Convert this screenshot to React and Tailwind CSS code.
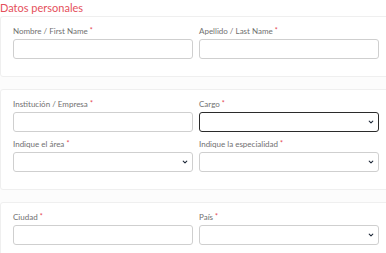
import React from 'react';

const Chevron = () => (
    <svg className="absolute right-[5px] top-1/2 -translate-y-1/2 h-[6px] w-[6px] text-gray-800 pointer-events-none" viewBox="0 0 10 10" fill="none">
        <path d="M2 3.5 L5 6.5 L8 3.5" stroke="currentColor" strokeWidth="1.8" strokeLinecap="round" strokeLinejoin="round" />
    </svg>
);

const Field = ({ label, select, focused }) => (
    <div className="flex flex-col">
        <label className="text-[8px] leading-[12px] text-[#707070] mb-[2px] whitespace-nowrap">
            {label} <span className="text-[7px] relative -top-[1px] text-[#e5404f]">*</span>
        </label>
        <div className="relative">
            <div
                className={
                    focused
                        ? 'h-[20px] rounded-[3px] border border-[#2b2b2b] bg-white'
                        : 'h-[20px] rounded-[3px] border border-[#cfcfcf] bg-white'
                }
            />
            {select && <Chevron />}
        </div>
    </div>
);

const Card = ({ children }) => (
    <div className="w-[392px] bg-white border border-[#efefef] rounded-[3px] pt-[8px] pb-[17px] px-[12px]">
        <div className="grid grid-cols-2 gap-x-[6px] gap-y-[6px]">{children}</div>
    </div>
);

export default function App() {
    return (
        <div className="w-[386px] h-[253px] overflow-hidden bg-white" style={{ fontFamily: 'Lato, sans-serif' }}>
            <h2 className="text-[11px] leading-[16px] text-[#e5505c]">Datos personales</h2>
            <div className="flex flex-col gap-[12px] bg-[#fcfcfc]">
                <Card>
                    <Field label="Nombre / First Name" />
                    <Field label="Apellido / Last Name" />
                </Card>
                <Card>
                    <Field label="Institución / Empresa" />
                    <Field label="Cargo" select focused />
                    <Field label="Indique el área" select />
                    <Field label="Indique la especialidad" select />
                </Card>
                <Card>
                    <Field label="Ciudad" />
                    <Field label="País" select />
                </Card>
            </div>
        </div>
    );
}
